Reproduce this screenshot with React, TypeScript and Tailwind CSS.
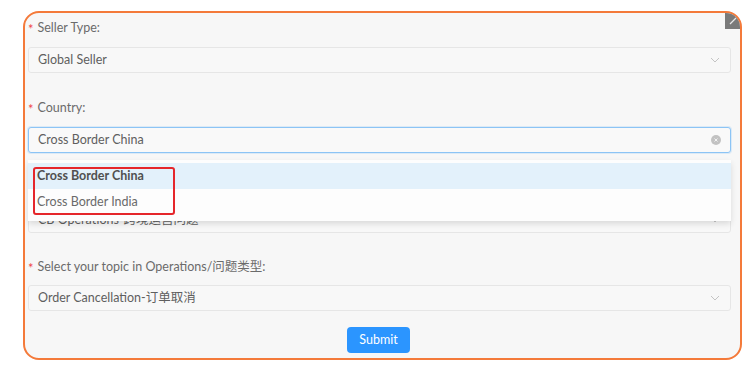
import React from "react";

const font = { fontFamily: 'Lato, "Noto Sans CJK SC", sans-serif' };

function Chevron() {
  return (
    <svg width="10" height="6" viewBox="0 0 10 6" className="shrink-0">
      <path d="M1 1 L5 5 L9 1" fill="none" stroke="#c4c4c4" strokeWidth="1" />
    </svg>
  );
}

function Label({ text }: { text: string }) {
  return (
    <div className="flex h-[20px] items-center text-[12.5px] text-[#6b6b6b]">
      <span className="mr-[4px] pt-[3px] text-[13px] leading-none text-[#f0464b]">*</span>
      <span>{text}</span>
    </div>
  );
}

function Select({ value, children }: { value: string; children?: React.ReactNode }) {
  return (
    <div className="mt-[9px] flex h-[26px] items-center justify-between rounded-[3px] border border-[#e6e6e6] bg-[#f8f8f8] pl-[9px] pr-[10px] text-[12.5px] text-[#5f5f5f]">
      <span>{value}</span>
      {children ?? <Chevron />}
    </div>
  );
}

export default function App() {
  return (
    <div className="h-[377px] w-[756px] bg-white pl-[23px] pt-[11px]" style={font}>
      <div className="relative h-[349px] w-[719px] overflow-hidden rounded-[16px] border-2 border-[#f47a3a] bg-[#f7f7f7] pl-[3px] pr-[9px] pt-[5px]">
        <div className="absolute right-0 top-0 flex h-[16px] w-[15px] items-center justify-center bg-[#7a7a7a]">
          <svg width="10" height="10" viewBox="0 0 10 10">
            <path d="M2 8 L8 2" stroke="#e8e8e8" strokeWidth="1.2" />
          </svg>
        </div>

        <div className="mb-[25px]">
          <Label text="Seller Type:" />
          <Select value="Global Seller" />
        </div>

        <div className="relative z-10 mb-[25px]">
          <Label text="Country:" />
          <div className="mt-[9px] flex h-[26px] items-center justify-between rounded-[3px] border border-[#8cc4f5] bg-[#f9f9f9] pl-[9px] pr-[9px] text-[12.5px] text-[#5f5f5f] shadow-[0_0_0_1px_rgba(140,196,245,0.25)]">
            <span>Cross Border China</span>
            <span className="flex h-[10px] w-[10px] items-center justify-center rounded-full bg-[#c2c2c2]">
              <svg width="6" height="6" viewBox="0 0 6 6">
                <path d="M1.5 1.5 L4.5 4.5 M4.5 1.5 L1.5 4.5" stroke="#f2f2f2" strokeWidth="1" />
              </svg>
            </span>
          </div>
          <div className="absolute left-0 right-0 top-[62px] bg-[#fdfdfd] pb-[6px] pt-[3px] shadow-[0_3px_6px_rgba(0,0,0,0.12)]">
            <div className="flex h-[26px] items-center bg-[#e3f1fb] pl-[9px] text-[12.5px] font-bold text-[#505050]">
              Cross Border China
            </div>
            <div className="flex h-[26px] items-center pl-[9px] text-[12.5px] text-[#6a6a6a]">
              Cross Border India
            </div>
            <div className="absolute left-[5px] top-[7px] h-[48px] w-[142px] rounded-[3px] border-2 border-[#e5262b]" />
          </div>
        </div>

        <div className="mb-[24px]">
          <div className="h-[20px]" />
          <Select value="CB Operations-跨境运营问题" />
        </div>

        <div>
          <Label text="Select your topic in Operations/问题类型:" />
          <div className="-mt-[1px]">
            <Select value="Order Cancellation-订单取消" />
          </div>
        </div>

        <div className="mt-[16px] flex justify-center pr-[2px]">
          <button className="flex h-[26px] w-[63px] items-center justify-center rounded-[4px] bg-[#2b95ff] text-[12.5px] text-white">
            Submit
          </button>
        </div>
      </div>
    </div>
  );
}
